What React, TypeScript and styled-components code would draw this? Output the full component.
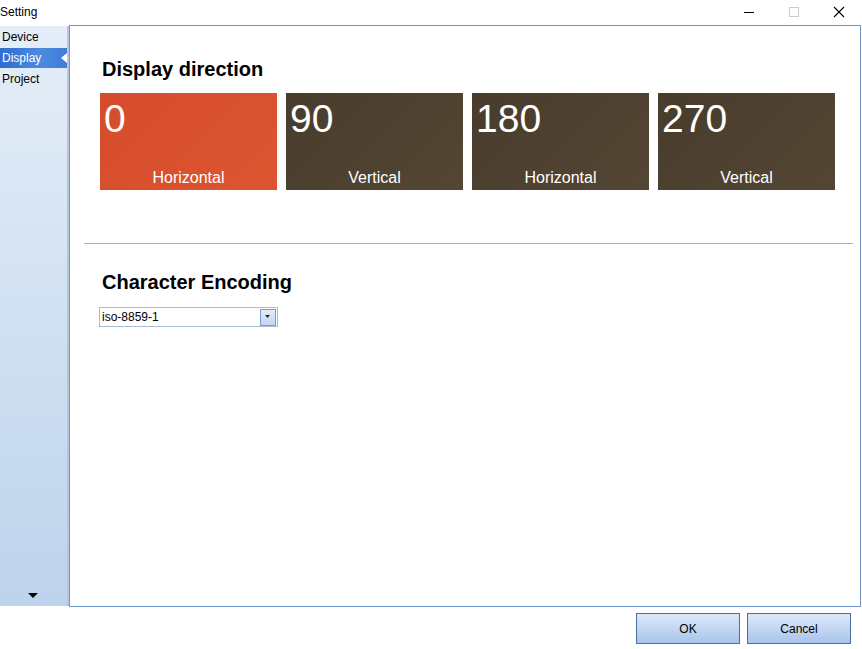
import styled, { createGlobalStyle } from 'styled-components';

const GlobalStyle = createGlobalStyle`
  html, body {
    margin: 0;
    padding: 0;
    background: #ffffff;
  }

  body {
    font-family: 'Liberation Sans', Arial, sans-serif;
    font-size: 12px;
    color: #000000;
  }
`;

interface Direction {
  angle: number;
  label: string;
}

const DIRECTIONS: Direction[] = [
  { angle: 0, label: 'Horizontal' },
  { angle: 90, label: 'Vertical' },
  { angle: 180, label: 'Horizontal' },
  { angle: 270, label: 'Vertical' },
];

const MENU = ['Device', 'Display', 'Project'];

function App() {
  const selectedMenu = 'Display';
  const selectedAngle = 0;

  return (
    <>
      <GlobalStyle />
      <StyledWindow>
        <StyledTitleBar>
          <StyledTitle>Setting</StyledTitle>
          <StyledControls>
            <StyledControl>
              <svg width="12" height="12" viewBox="0 0 12 12">
                <line x1="1" y1="6.5" x2="11" y2="6.5" stroke="#000" strokeWidth="1" />
              </svg>
            </StyledControl>
            <StyledControl>
              <svg width="12" height="12" viewBox="0 0 12 12">
                <rect x="1.5" y="1.5" width="9" height="9" fill="none" stroke="#cccccc" strokeWidth="1" />
              </svg>
            </StyledControl>
            <StyledControl>
              <svg width="12" height="12" viewBox="0 0 12 12">
                <path d="M1 1 L11 11 M11 1 L1 11" stroke="#000" strokeWidth="1.1" />
              </svg>
            </StyledControl>
          </StyledControls>
        </StyledTitleBar>

        <StyledBody>
          <StyledSidebar>
            <StyledMenu>
              {MENU.map((item) => (
                <StyledMenuItem key={item} $active={item === selectedMenu}>
                  {item}
                  {item === selectedMenu && <StyledPointer />}
                </StyledMenuItem>
              ))}
            </StyledMenu>
            <StyledScrollArrow />
          </StyledSidebar>

          <StyledPanel>
            <StyledHeading $gap={0}>Display direction</StyledHeading>
            <StyledTileRow>
              {DIRECTIONS.map((dir) => (
                <StyledTile key={dir.angle} $selected={dir.angle === selectedAngle}>
                  <StyledTileNumber>{dir.angle}</StyledTileNumber>
                  <StyledTileLabel>{dir.label}</StyledTileLabel>
                </StyledTile>
              ))}
            </StyledTileRow>

            <StyledDivider />

            <StyledHeading $gap={26}>Character Encoding</StyledHeading>
            <StyledSelect>
              <StyledSelectText>iso-8859-1</StyledSelectText>
              <StyledSelectButton>
                <svg width="6" height="4" viewBox="0 0 6 4">
                  <path d="M0 0 H5 L2.5 3 Z" fill="#1a2a44" />
                </svg>
              </StyledSelectButton>
            </StyledSelect>
          </StyledPanel>
        </StyledBody>

        <StyledFooter>
          <StyledButton>OK</StyledButton>
          <StyledButton>Cancel</StyledButton>
        </StyledFooter>
      </StyledWindow>
    </>
  );
}

export default App;

const StyledWindow = styled.div`
  width: 862px;
  height: 649px;

  display: flex;
  flex-direction: column;
  overflow: hidden;
`;

const StyledTitleBar = styled.div`
  height: 25px;

  display: flex;
  align-items: center;
  justify-content: space-between;
`;

const StyledTitle = styled.div`
  font-size: 12px;
  line-height: 14px;
  margin-top: -2px;
`;

const StyledControls = styled.div`
  display: flex;
  align-items: center;
  margin-right: 1px;
  margin-top: -1px;
`;

const StyledControl = styled.div`
  width: 45px;
  height: 24px;

  display: flex;
  align-items: center;
  justify-content: center;
`;

const StyledBody = styled.div`
  height: 582px;

  display: flex;
`;

const StyledSidebar = styled.div`
  width: 67px;
  margin: 1px 0;
  border-right: 2px solid #b7c6da;

  display: flex;
  flex-direction: column;
  justify-content: space-between;
  background: linear-gradient(to bottom, #e5eef8 0%, #d3e2f2 45%, #bdd3ec 100%);
`;

const StyledMenu = styled.div`
  padding-top: 1px;

  display: flex;
  flex-direction: column;
`;

const StyledMenuItem = styled.div<{ $active: boolean }>`
  position: relative;
  height: 20px;
  margin-bottom: 1px;
  padding-left: 2px;

  display: flex;
  align-items: center;
  font-size: 12px;
  color: ${({ $active }) => ($active ? '#ffffff' : '#000000')};
  background: ${({ $active }) =>
    $active ? 'linear-gradient(to right, #2f6dcf 0%, #4d8be0 60%, #3f7bd8 100%)' : 'transparent'};
`;

const StyledPointer = styled.span`
  position: absolute;
  right: 0;
  top: 5px;
  width: 0;
  height: 0;
  border-top: 5px solid transparent;
  border-bottom: 5px solid transparent;
  border-right: 6px solid #ffffff;
`;

const StyledScrollArrow = styled.span`
  align-self: center;
  width: 0;
  height: 0;
  margin: 0 0 8px -1px;
  border-left: 5px solid transparent;
  border-right: 5px solid transparent;
  border-top: 5px solid #000000;
`;

const StyledPanel = styled.div`
  flex: 1;
  margin-right: 1px;
  padding-top: 31px;
  border: 1px solid #6f96cb;

  display: flex;
  flex-direction: column;
  background: #ffffff;
`;

const StyledHeading = styled.h2<{ $gap: number }>`
  margin: ${({ $gap }) => $gap}px 0 0 32px;
  font-size: 20px;
  line-height: 24px;
  font-weight: bold;
  color: #000000;
`;

const StyledTileRow = styled.div`
  margin: 12px 0 0 30px;

  display: flex;
  gap: 9px;
`;

const StyledTile = styled.div<{ $selected: boolean }>`
  width: 177px;
  height: 97px;
  padding: 4px 0 3px 4px;
  box-sizing: border-box;

  display: flex;
  flex-direction: column;
  justify-content: space-between;
  color: #ffffff;
  background: ${({ $selected }) =>
    $selected
      ? 'linear-gradient(135deg, #d54c2c 0%, #dc5530 100%)'
      : 'linear-gradient(135deg, #483c2d 0%, #544634 100%)'};
`;

const StyledTileNumber = styled.div`
  font-size: 39px;
  line-height: 44px;
`;

const StyledTileLabel = styled.div`
  margin-left: -4px;
  font-size: 16px;
  line-height: 18px;
  text-align: center;
`;

const StyledDivider = styled.div`
  height: 1px;
  margin: 53px 7px 0 14px;
  background: #9cb2cc;
`;

const StyledSelect = styled.div`
  width: 179px;
  height: 20px;
  margin: 13px 0 0 29px;
  border: 1px solid #abbbd2;
  box-sizing: border-box;

  display: flex;
  align-items: center;
  justify-content: space-between;
`;

const StyledSelectText = styled.span`
  padding-left: 2px;
  font-size: 12px;
`;

const StyledSelectButton = styled.span`
  width: 14px;
  height: 15px;
  margin-right: 1px;
  border: 1px solid #7a9fcd;

  display: flex;
  align-items: center;
  justify-content: center;
  background: linear-gradient(to bottom, #e3edf9 0%, #c2d6ef 100%);
`;

const StyledFooter = styled.div`
  flex: 1;
  padding: 6px 11px 0 0;

  display: flex;
  justify-content: flex-end;
  align-items: flex-start;
  gap: 7px;
`;

const StyledButton = styled.button`
  width: 104px;
  height: 31px;
  padding: 0;
  border: 1px solid #4d6f9c;
  border-radius: 0;

  font-family: 'Liberation Sans', Arial, sans-serif;
  font-size: 12px;
  color: #000000;
  background: linear-gradient(to bottom, #dde9f8 0%, #c3d7f1 50%, #a7c4ea 100%);
`;
